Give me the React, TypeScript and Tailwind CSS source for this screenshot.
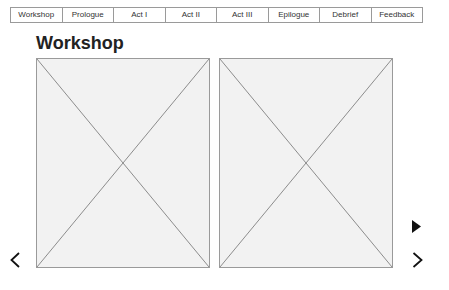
import React from "react";

const tabs = ["Workshop", "Prologue", "Act I", "Act II", "Act III", "Epilogue", "Debrief", "Feedback"];

const Placeholder = () => {
    return (
        <div className="relative w-[174px] h-[210px] border border-[#9a9a9a] bg-[#f2f2f2]">
            <svg className="absolute inset-0 w-full h-full" viewBox="0 0 100 100" preserveAspectRatio="none">
                <line x1="0" y1="0" x2="100" y2="100" stroke="#8c8c8c" strokeWidth="1" vectorEffect="non-scaling-stroke" />
                <line x1="100" y1="0" x2="0" y2="100" stroke="#8c8c8c" strokeWidth="1" vectorEffect="non-scaling-stroke" />
            </svg>
        </div>
    );
};

const App = () => {
    return (
        <div className="w-[449px] h-[290px] bg-white font-['Liberation_Sans',Arial,sans-serif]">
            <div className="pt-[7px] px-[10px]">
                <div className="flex w-[413px] border border-[#9a9a9a]">
                    {tabs.map((t, i) => (
                        <div
                            key={t}
                            className={
                                "flex-1 h-[14px] flex items-center justify-center text-[8px] text-[#333] " +
                                (i > 0 ? "border-l border-[#9a9a9a]" : "")
                            }
                        >
                            {t}
                        </div>
                    ))}
                </div>
            </div>

            <div className="flex items-end">
                <div className="w-[36px] pl-[10px]">
                    <svg width="10" height="16" viewBox="0 0 10 16">
                        <polyline points="9,1 1.5,8 9,15" fill="none" stroke="#111" strokeWidth="1.8" />
                    </svg>
                </div>

                <div className="flex flex-col">
                    <h1 className="mt-[9px] mb-[4px] text-[18px] leading-[22px] font-bold text-[#222]">Workshop</h1>
                    <div className="flex gap-[9px]">
                        <Placeholder />
                        <Placeholder />
                    </div>
                </div>

                <div className="pl-[19px] flex flex-col gap-[19px]">
                    <svg width="10" height="13" viewBox="0 0 10 13">
                        <polygon points="0,0 9,6.5 0,13" fill="#111" />
                    </svg>
                    <svg width="11" height="16" viewBox="0 0 11 16">
                        <polyline points="1.5,1 9.5,8 1.5,15" fill="none" stroke="#111" strokeWidth="1.8" />
                    </svg>
                </div>
            </div>
        </div>
    );
};

export default App;
